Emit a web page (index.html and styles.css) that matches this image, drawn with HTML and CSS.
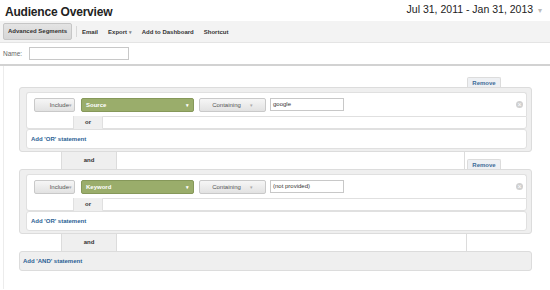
FILE: index.html
```html
<!DOCTYPE html>
<html lang="en">
<head>
    <meta name="viewport" content="width=device-width, initial-scale=1">
    <link rel="stylesheet" href="styles.css">
</head>
<body>

<div class="top">
    <h1 class="title">Audience Overview</h1>
    <div class="dates">Jul 31, 2011 - Jan 31, 2013 <span class="caret">&#9662;</span></div>
</div>

<div class="toolbar">
    <span class="seg-btn">Advanced Segments</span>
    <span class="sep"></span>
    <span class="tool">Email</span>
    <span class="tool">Export <span class="arr">&#9662;</span></span>
    <span class="tool">Add to Dashboard</span>
    <span class="tool">Shortcut</span>
</div>

<div class="name-row">
    <label class="name-label">Name:</label>
    <span class="name-input"></span>
</div>

<div class="editor">
    <div class="tab-row"><span class="tab">Remove</span></div>

    <!-- first AND block -->
    <div class="panel">
        <div class="cond">
            <span class="btn include">Include<span class="arr">&#9662;</span></span>
            <span class="dim">Source<span class="dim-arr">&#9662;</span></span>
            <span class="btn match">Containing<span class="arr">&#9662;</span></span>
            <span class="value">google</span>
            <span class="close">&times;</span>
        </div>
        <div class="or-row">
            <span class="or-left"></span>
            <span class="or-label">or</span>
            <span class="or-box"></span>
        </div>
        <div class="add-or">Add 'OR' statement</div>
    </div>

    <div class="and-row">
        <span class="and-left"></span>
        <span class="and-label">and</span>
        <span class="and-box"></span>
        <span class="tab tab-low">Remove</span>
    </div>

    <!-- second AND block -->
    <div class="panel">
        <div class="cond">
            <span class="btn include">Include<span class="arr">&#9662;</span></span>
            <span class="dim">Keyword<span class="dim-arr">&#9662;</span></span>
            <span class="btn match">Containing<span class="arr">&#9662;</span></span>
            <span class="value">(not provided)</span>
            <span class="close">&times;</span>
        </div>
        <div class="or-row">
            <span class="or-left"></span>
            <span class="or-label">or</span>
            <span class="or-box"></span>
        </div>
        <div class="add-or">Add 'OR' statement</div>
    </div>

    <div class="and-row">
        <span class="and-left"></span>
        <span class="and-label">and</span>
        <span class="and-box"></span>
        <span class="tab-space"></span>
    </div>

    <div class="add-and">Add 'AND' statement</div>
</div>

</body>
</html>
```

FILE: styles.css
```css
body {
    margin: 0;
    font-family: 'Liberation Sans', Arial, sans-serif;
    background-color: #fff;
    color: #333;
}

/* Title bar */
.top {
    height: 21px;
    display: flex;
    justify-content: space-between;
    align-items: flex-start;
}

.title {
    margin: 5px 0 0 5px;
    font-size: 12px;
    font-weight: bold;
    color: #222;
    letter-spacing: -0.2px;
}

.dates {
    margin: 3px 8px 0 0;
    font-size: 10.5px;
    color: #222;
}

.dates .caret {
    color: #bbb;
    font-size: 8px;
    margin-left: 2px;
}

/* Toolbar */
.toolbar {
    height: 21px;
    background-color: #f3f3f3;
    border-bottom: 1px solid #e4e4e4;
    display: flex;
    align-items: center;
    padding-left: 3px;
    font-size: 6px;
    font-weight: bold;
    color: #333;
}

.seg-btn {
    height: 15px;
    line-height: 15px;
    padding: 0 4px;
    background: linear-gradient(#e4e4e4, #d6d6d6);
    border: 1px solid #c6c6c6;
    border-radius: 2px;
    color: #333;
}

.sep {
    width: 1px;
    height: 11px;
    background-color: #d8d8d8;
    margin: 0 5px 0 4px;
}

.tool {
    margin-right: 10px;
}

.tool .arr {
    color: #888;
    font-size: 5px;
}

/* Name row */
.name-row {
    height: 21px;
    display: flex;
    align-items: center;
    padding-left: 3px;
    border-bottom: 2px solid #d2d2d2;
}

.name-label {
    font-size: 6.5px;
    color: #666;
    width: 26px;
}

.name-input {
    width: 98px;
    height: 11px;
    border: 1px solid #c8c8c8;
    background: #fff;
}

/* Segment editor */
.editor {
    margin-left: 3px;
    border-left: 1px solid #ececec;
    padding: 11px 0 18px 15px;
    width: 513px;
}

.tab-row {
    display: flex;
    justify-content: flex-end;
    padding-right: 31px;
    height: 10px;
}

.tab {
    width: 32px;
    height: 9px;
    line-height: 10px;
    text-align: center;
    font-size: 6px;
    font-weight: bold;
    color: #3d6c98;
    background-color: #eef0f3;
    border: 1px solid #dcdcdc;
    border-bottom: none;
    border-radius: 2px 2px 0 0;
}

.panel {
    background-color: #efefef;
    border: 1px solid #dcdcdc;
    border-radius: 3px;
    padding: 4px 4px 2px 6px;
}

.cond {
    height: 23px;
    background-color: #fff;
    border: 1px solid #e0e0e0;
    border-bottom: none;
    border-radius: 3px 3px 0 0;
    display: flex;
    align-items: center;
    padding-left: 7px;
    font-size: 6px;
}

.btn {
    height: 12px;
    line-height: 12px;
    background: linear-gradient(#f6f6f6, #e2e2e2);
    border: 1px solid #c9c9c9;
    border-radius: 2px;
    color: #555;
}

.btn .arr {
    color: #aaa;
    font-size: 5px;
}

.include {
    width: 37px;
    text-align: right;
    padding-right: 2px;
    margin-right: 6px;
}

.dim {
    width: 103px;
    height: 12px;
    line-height: 12px;
    padding: 0 4px;
    background-color: #9aad6b;
    border: 1px solid #86985a;
    border-radius: 2px;
    color: #fff;
    font-weight: bold;
    display: flex;
    justify-content: space-between;
    margin-right: 5px;
}

.dim-arr {
    font-size: 5px;
}

.match {
    width: 65px;
    text-align: center;
    margin-right: 4px;
}

.match .arr {
    margin-left: 9px;
}

.value {
    width: 70px;
    height: 11px;
    line-height: 11px;
    border: 1px solid #c8c8c8;
    padding-left: 2px;
    color: #333;
}

.close {
    margin-left: auto;
    margin-right: 3px;
    width: 7px;
    height: 7px;
    line-height: 7px;
    border-radius: 50%;
    background-color: #d0d0d0;
    color: #fff;
    font-size: 7px;
    text-align: center;
}

/* OR connector */
.or-row {
    height: 13px;
    display: flex;
}

.or-left {
    width: 46px;
    background-color: #fff;
    border: 1px solid #e0e0e0;
    border-top: none;
    border-radius: 0 0 0 3px;
}

.or-label {
    width: 28px;
    text-align: center;
    font-size: 6px;
    font-weight: bold;
    line-height: 13px;
    color: #333;
}

.or-box {
    flex: 1;
    background-color: #fff;
    border: 1px solid #e0e0e0;
    border-radius: 0 0 3px 0;
}

.add-or {
    height: 18px;
    line-height: 18px;
    background-color: #fff;
    border: 1px solid #e0e0e0;
    border-radius: 3px;
    padding-left: 4px;
    font-size: 6px;
    font-weight: bold;
    color: #2b5f94;
}

/* AND connector */
.and-row {
    height: 17px;
    display: flex;
    align-items: stretch;
}

.and-left {
    width: 42px;
    border-right: 1px solid #dcdcdc;
}

.and-label {
    width: 54px;
    background-color: #efefef;
    text-align: center;
    font-size: 6px;
    font-weight: bold;
    line-height: 17px;
    color: #333;
}

.and-box {
    flex: 1;
    border: 1px solid #dcdcdc;
    border-top: none;
    border-bottom: none;
}

.tab-low {
    align-self: flex-end;
    margin: 0 31px 0 2px;
}

.tab-space {
    width: 65px;
}

.add-and {
    height: 18px;
    line-height: 18px;
    background-color: #efefef;
    border: 1px solid #dcdcdc;
    border-radius: 3px;
    padding-left: 3px;
    font-size: 6px;
    font-weight: bold;
    color: #2b5f94;
}
```
